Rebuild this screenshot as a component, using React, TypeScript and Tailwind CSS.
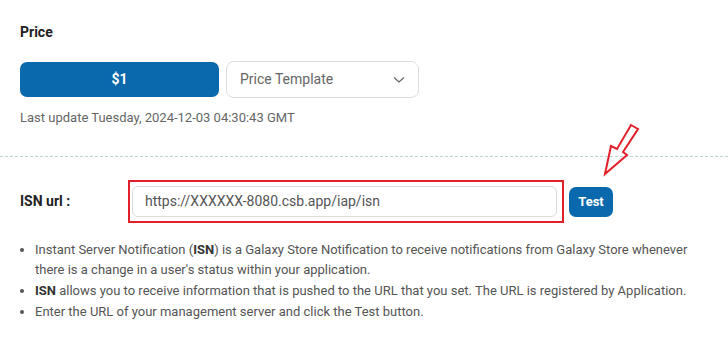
import React from "react";

export default function App() {
  return (
    <div
      className="relative w-[728px] h-[349px] bg-white overflow-hidden"
      style={{ fontFamily: "Roboto, 'Noto Sans', sans-serif" }}
    >
      <div className="pt-[22px] px-[20px]">
        <div className="text-[14px] leading-[20px] font-bold text-[#222]">Price</div>
        <div className="mt-[19px] flex items-center gap-[7px]">
          <div className="w-[199px] h-[35px] rounded-[7px] bg-[#0a69ad] flex items-center justify-center text-white text-[14px] font-bold">
            $1
          </div>
          <div className="w-[193px] h-[37px] border border-[#dedede] rounded-[8px] flex items-center justify-between pl-[13px] pr-[13px]">
            <span className="text-[14px] text-[#666]">Price Template</span>
            <svg width="12" height="8" viewBox="0 0 12 8" fill="none">
              <path d="M1 1.5 L6 6 L11 1.5" stroke="#666" strokeWidth="1.3" />
            </svg>
          </div>
        </div>
        <div className="mt-[11px] text-[13px] leading-[18px] text-[#666]">
          Last update Tuesday, 2024-12-03 04:30:43 GMT
        </div>
      </div>
      <div className="mt-[29px] border-t border-dashed border-[#bcd6d2]" />
      <div className="mt-[23px] pl-[20px] flex items-center">
        <div className="w-[108px] text-[14px] font-bold text-[#222]">ISN url :</div>
        <div className="border-2 border-[#e3202a] pt-[4px] pb-[4px] pl-[2px] pr-[5px]">
          <div className="w-[425px] h-[31px] border border-[#dcdcdc] rounded-[6px] pl-[12px] flex items-center text-[14px] text-[#555]">
            https://XXXXXX-8080.csb.app/iap/isn
          </div>
        </div>
        <div className="ml-[5px] w-[44px] h-[30px] rounded-[7px] bg-[#0a69ad] flex items-center justify-center text-white text-[13px] font-bold">
          Test
        </div>
      </div>
      <ul className="mt-[17px] pl-[20px] pr-[13px] text-[13px] leading-[20px] text-[#555]">
        <li className="flex mb-[1px]">
          <span className="w-[15px] shrink-0 flex pt-[8px]">
            <span className="w-[4px] h-[4px] rounded-full bg-[#555]" />
          </span>
          <span>
            Instant Server Notification (<b className="text-[#333]">ISN</b>) is a Galaxy Store Notification to receive notifications from Galaxy Store whenever there is a change in a user's status within your application.
          </span>
        </li>
        <li className="flex mb-[1px]">
          <span className="w-[15px] shrink-0 flex pt-[8px]">
            <span className="w-[4px] h-[4px] rounded-full bg-[#555]" />
          </span>
          <span>
            <b className="text-[#333]">ISN</b> allows you to receive information that is pushed to the URL that you set. The URL is registered by Application.
          </span>
        </li>
        <li className="flex">
          <span className="w-[15px] shrink-0 flex pt-[8px]">
            <span className="w-[4px] h-[4px] rounded-full bg-[#555]" />
          </span>
          <span>Enter the URL of your management server and click the Test button.</span>
        </li>
      </ul>
      <svg className="absolute left-0 top-0 pointer-events-none" width="728" height="349">
        <polygon
          points="605,174 611,146 617,149 631,125 638,129 623,152 627,155"
          fill="none"
          stroke="#e3202a"
          strokeWidth="2"
          strokeLinejoin="miter"
        />
      </svg>
    </div>
  );
}
